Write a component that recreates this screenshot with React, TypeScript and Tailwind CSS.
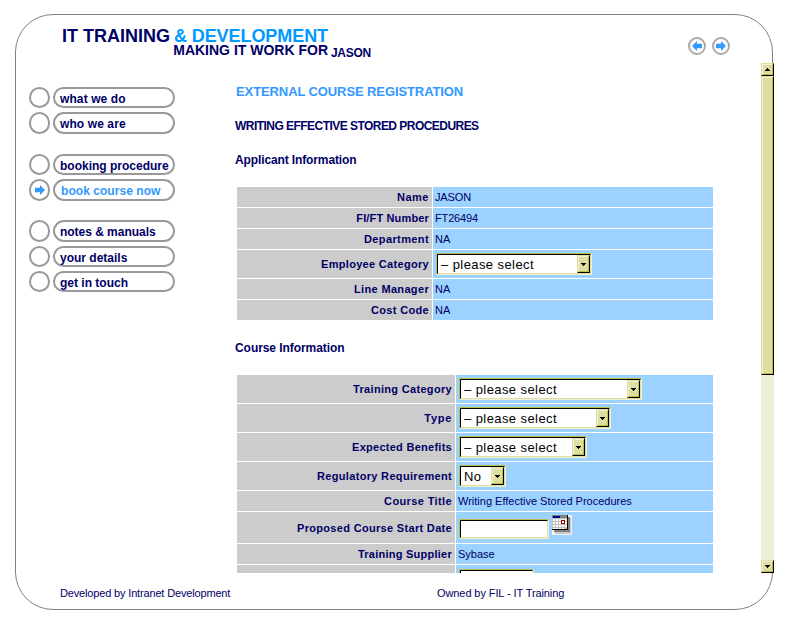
import type { ReactNode } from "react";

function Arrow({ flip = false }: { flip?: boolean }) {
  return (
    <svg width="10" height="10" viewBox="0 0 10 10" className={"shrink-0 " + (flip ? "rotate-180" : "")}>
      <path d="M0 2.7h5V0l5 5-5 5V7.3H0z" fill="#3399ff" />
    </svg>
  );
}

function SmallArrow({ up = false }: { up?: boolean }) {
  return (
    <svg width="5" height="3" viewBox="0 0 5 3" shapeRendering="crispEdges">
      {up ? <path d="M2 0h1v1h1v1h1v1H0V2h1V1h1z" /> : <path d="M0 0h5v1H4v1H3v1H2V2H1V1H0z" />}
    </svg>
  );
}

function Bevel({ className, children }: { className: string; children?: ReactNode }) {
  return (
    <div className={"shrink-0 border border-t-[#dedea2] border-l-[#dedea2] border-r-black border-b-black " + className}>
      <div className="flex h-full w-full items-center justify-center border border-t-[#f0f0d6] border-l-[#f0f0d6] border-r-[#bdbd42] border-b-[#bdbd42] bg-[#dedea2]">
        {children}
      </div>
    </div>
  );
}

function Sunken({ className, children }: { className: string; children?: ReactNode }) {
  return (
    <div className={"shrink-0 border border-t-[#bdbd4a] border-l-[#bdbd4a] border-r-[#efefd6] border-b-[#efefd6] " + className}>
      <div className="flex h-full w-full border border-t-black border-l-black border-r-[#dedea2] border-b-[#dedea2] bg-white">
        {children}
      </div>
    </div>
  );
}

function Select({ className, text = "– please select" }: { className: string; text?: string }) {
  return (
    <Sunken className={"h-[22px] " + className}>
      <div className="flex-1 overflow-hidden pl-[3px] text-[13px] leading-[20px] tracking-[0.42px] text-black">{text}</div>
      <Bevel className="h-[18px] w-[13px]">
        <SmallArrow />
      </Bevel>
    </Sunken>
  );
}

function Calendar() {
  return (
    <svg width="20" height="20" viewBox="0 0 20 20" shapeRendering="crispEdges" className="ml-[3px] shrink-0">
      <rect width="20" height="20" fill="#f4f4f4" />
      <rect x="3" y="3" width="16" height="16" fill="#c8c8c8" />
      <rect x="2" y="2" width="16" height="15" fill="#808080" />
      <rect width="16" height="15" fill="#000" />
      <rect width="15" height="14" fill="#c0c0c0" />
      <path d="M1 4h2v2H1zM4 4h2v2H4zM7 4h2v2H7zM10 4h2v2h-2zM13 4h2v2h-2zM1 7h2v2H1zM4 7h2v2H4zM7 7h2v2H7zM10 7h2v2h-2zM13 7h2v2h-2zM1 10h2v2H1zM4 10h2v2H4zM7 10h2v2H7zM10 10h2v2h-2zM13 10h2v2h-2zM1 13h2v1H1zM4 13h2v1H4zM7 13h2v1H7zM10 13h2v1h-2z" fill="#fff" />
      <rect width="15" height="3" fill="#808080" />
      <rect x="1" y="1" width="7" height="2" fill="#000080" />
      <rect x="9.5" y="5.5" width="3" height="3" fill="#fff" stroke="#990000" />
    </svg>
  );
}

function NavItem({ label, tracking, height = "h-[21px]", active = false }: { label: string; tracking: string; height?: string; active?: boolean }) {
  return (
    <div className={"flex gap-[3px] " + height}>
      <div className="flex h-full w-[21px] items-center justify-center rounded-full border-2 border-[#999]">
        {active && <Arrow />}
      </div>
      <div
        className={
          "h-full w-[122px] rounded-full border-2 border-[#999] pt-[2px] text-[12px] leading-[17px] font-bold " +
          (active ? "pl-[6px] text-[#3399ff] " : "pl-[5px] text-[#000066] ") + tracking
        }
      >
        {label}
      </div>
    </div>
  );
}

function Row({ label, height, col, tracking, children }: { label: string; height: string; col: string; tracking: string; children?: ReactNode }) {
  return (
    <div className={"flex shrink-0 gap-px text-[11px] " + height}>
      <div className={"flex shrink-0 items-center justify-end bg-[#ccc] pr-[3px] font-bold " + col}>
        <span className={tracking}>{label}</span>
      </div>
      <div className="flex flex-1 items-center bg-[#9cd2ff] pl-[2px]">{children}</div>
    </div>
  );
}

const A = "w-[195px]";
const B = "w-[218px]";

export default function App() {
  return (
    <div className="h-[626px] w-[791px] overflow-hidden bg-white pt-[14px] pl-[15px] font-['Liberation_Sans',Arial,sans-serif] whitespace-nowrap text-[#000066]">
      <div className="flex h-[596px] w-[758px] flex-col rounded-[38px] border border-[#808080]">
        <header className="flex h-[48px] shrink-0 justify-between pl-[46px]">
          <div className="flex">
            <div className="w-[266px] pt-[14px] font-bold">
              <div className="flex h-[14px] justify-between text-[18px] leading-[15px]">
                <span>IT TRAINING</span>
                <span className="tracking-[-0.07px] text-[#0099ff]">&amp; DEVELOPMENT</span>
              </div>
              <div className="text-right text-[14px] leading-[14px]">MAKING IT WORK FOR</div>
            </div>
            <div className="pt-[31px] pl-[3px] text-[12px] leading-[14px] font-bold tracking-[-0.3px]">JASON</div>
          </div>
          <div className="flex gap-[6px] pt-[22px] pr-[42px]">
            <div className="flex h-[18px] w-[18px] items-center justify-center rounded-full border-2 border-[#aaa]"><Arrow flip /></div>
            <div className="flex h-[18px] w-[18px] items-center justify-center rounded-full border-2 border-[#aaa]"><Arrow /></div>
          </div>
        </header>

        <div className="flex h-[510px] shrink-0">
          <nav className="flex w-[219px] shrink-0 flex-col pt-[24px] pl-[13px]">
            <div className="flex flex-col gap-[4px]">
              <NavItem label="what we do" tracking="tracking-[0.1px]" />
              <NavItem label="who we are" tracking="tracking-[0.1px]" height="h-[22px]" />
            </div>
            <div className="mt-[20px] flex flex-col gap-[4px]">
              <NavItem label="booking procedure" tracking="tracking-normal" />
              <NavItem label="book course now" tracking="tracking-[0.05px]" height="h-[22px]" active />
            </div>
            <div className="mt-[19px] flex flex-col gap-[4px]">
              <NavItem label="notes & manuals" tracking="tracking-[-0.03px]" height="h-[22px]" />
              <NavItem label="your details" tracking="tracking-normal" />
              <NavItem label="get in touch" tracking="tracking-normal" />
            </div>
          </nav>

          <main className="flex w-[526px] shrink-0 flex-col overflow-hidden pt-[19px] text-[12px] leading-[20px]">
            <h1 className="pl-px text-[13px] font-bold tracking-[-0.1px] text-[#3399ff]">EXTERNAL COURSE REGISTRATION</h1>
            <h2 className="mt-[14px] font-bold tracking-[-0.54px]">WRITING EFFECTIVE STORED PROCEDURES</h2>
            <h3 className="mt-[14px] font-bold tracking-[-0.12px]">Applicant Information</h3>
            <section className="mt-[17px] ml-[2px] flex w-[476px] shrink-0 flex-col gap-px">
              <Row label="Name" height="h-[20px]" col={A} tracking="tracking-[0.5px]"><span className="tracking-[-0.13px]">JASON</span></Row>
              <Row label="FI/FT Number" height="h-[20px]" col={A} tracking="tracking-[0.15px]"><span className="tracking-[-0.15px]">FT26494</span></Row>
              <Row label="Department" height="h-[20px]" col={A} tracking="tracking-[0.39px]">NA</Row>
              <Row label="Employee Category" height="h-[28px]" col={A} tracking="tracking-[0.31px]"><Select className="ml-px w-[156px]" /></Row>
              <Row label="Line Manager" height="h-[20px]" col={A} tracking="tracking-[0.34px]">NA</Row>
              <Row label="Cost Code" height="h-[20px]" col={A} tracking="tracking-[0.33px]">NA</Row>
            </section>
            <h3 className="mt-[18px] font-bold tracking-[-0.06px]">Course Information</h3>
            <section className="mt-[17px] ml-[2px] flex w-[476px] shrink-0 flex-col gap-px">
              <Row label="Training Category" height="h-[28px]" col={B} tracking="tracking-[0.32px]"><Select className="ml-px w-[183px]" /></Row>
              <Row label="Type" height="h-[28px]" col={B} tracking="tracking-[0.7px]"><Select className="ml-px w-[152px]" /></Row>
              <Row label="Expected Benefits" height="h-[28px]" col={B} tracking="tracking-[0.27px]"><Select className="ml-px w-[128px]" /></Row>
              <Row label="Regulatory Requirement" height="h-[28px]" col={B} tracking="tracking-[0.33px]"><Select className="ml-px w-[47px]" text="No" /></Row>
              <Row label="Course Title" height="h-[20px]" col={B} tracking="tracking-[0.38px]">Writing Effective Stored Procedures</Row>
              <Row label="Proposed Course Start Date" height="h-[31px]" col={B} tracking="tracking-[0.32px]">
                <Sunken className="mt-[3px] ml-px h-[20px] w-[90px]" />
                <div className="-mt-[5px]"><Calendar /></div>
              </Row>
              <Row label="Training Supplier" height="h-[20px]" col={B} tracking="tracking-[0.25px]">Sybase</Row>
              <Row label="" height="h-[28px]" col={B} tracking=""><Sunken className="ml-px h-[20px] w-[75px]" /></Row>
            </section>
          </main>

          <div className="flex w-[13px] shrink-0 flex-col bg-[#efefd6]">
            <Bevel className="h-[13px] w-[13px]"><SmallArrow up /></Bevel>
            <Bevel className="h-[299px] w-[13px]" />
            <Bevel className="mt-auto h-[13px] w-[13px]"><SmallArrow /></Bevel>
          </div>
        </div>

        <footer className="flex pt-[12px] pl-[44px] text-[11px] leading-[16px]">
          <span className="w-[377px] tracking-[-0.16px]">Developed by Intranet Development</span>
          <span className="tracking-[-0.09px]">Owned by FIL - IT Training</span>
        </footer>
      </div>
    </div>
  );
}
